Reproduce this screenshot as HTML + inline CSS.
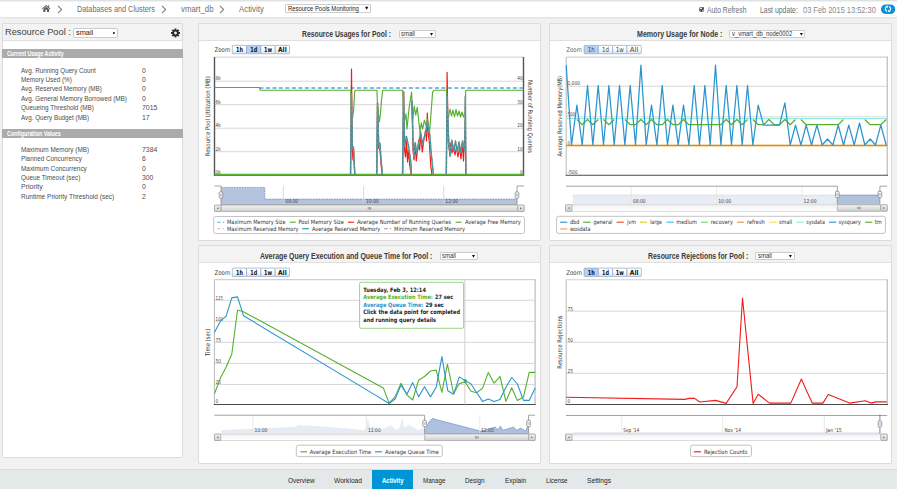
<!DOCTYPE html>
<html lang="en"><head><meta charset="utf-8"><title>Resource Pools Monitoring</title>
<style>
html,body{margin:0;padding:0;}
body{width:897px;height:489px;overflow:hidden;position:relative;background:#f1f1f1;font-family:"Liberation Sans",sans-serif;}
.t{position:absolute;white-space:nowrap;transform-origin:0 0;display:block;}
.abs{position:absolute;box-sizing:border-box;}
#topbar{left:0;top:0;width:897px;height:17px;background:linear-gradient(#d9dcdc 0,#e6e8e8 1px,#fff 2.2px);box-shadow:0 1px 1.5px rgba(0,0,0,.08);}
.panel{background:#fff;border:1px solid #dcdcdc;border-radius:1px;}
.phead{left:0;top:0;right:0;height:17px;background:#f3f3f3;border-bottom:1px solid #e0e0e0;}
.bar{background:#ababab;height:9px;}
.sel{background:#fff;border:1px solid #cdcdcd;border-radius:1px;}
#nav{left:0;top:468.6px;width:897px;height:20.4px;background:#e5e8e8;border-top:1px solid #d9dcdc;}
#navact{left:372px;top:469.5px;width:40.6px;height:19.5px;background:#0096d6;}
svg{position:absolute;left:0;top:0;overflow:visible;}

</style></head>
<body>
<div id="topbar" class="abs"></div>
<svg width="897" height="20" viewBox="0 0 897 20"><g fill="#5e5e5e">
<path d="M42 8.6 L46.2 4.9 L50.4 8.6 L49.7 9.3 L46.2 6.2 L42.7 9.3 Z"/>
<path d="M43.3 9.3 L46.2 6.8 L49.1 9.3 L49.1 11.9 L47 11.9 L47 9.8 L45.4 9.8 L45.4 11.9 L43.3 11.9 Z"/>
<rect x="48.2" y="5.2" width="0.9" height="2"/></g>
<g fill="none" stroke="#808080" stroke-width="1.1">
<path d="M58 5.9 L61.6 9.5 L58 13.1"/><path d="M162 5.9 L165.6 9.5 L162 13.1"/><path d="M220 5.9 L223.6 9.5 L220 13.1"/></g>
</svg>
<span class="t " style="left:76.60px;top:5.10px;font-size:8.4px;line-height:8.4px;color:#6e6e6e;transform:scaleX(0.8712);">Databases and Clusters</span>
<span class="t " style="left:180.60px;top:5.10px;font-size:8.4px;line-height:8.4px;color:#6e6e6e;transform:scaleX(0.9310);">vmart_db</span>
<span class="t " style="left:239.10px;top:5.10px;font-size:8.4px;line-height:8.4px;color:#6e6e6e;transform:scaleX(0.9397);">Activity</span>
<div class="abs sel" style="left:284.7px;top:3.9px;width:86px;height:8.8px;"></div>
<span class="t " style="left:287.90px;top:5.60px;font-size:6.4px;line-height:6.4px;color:#222;transform:scaleX(0.9240);">Resource Pools Monitoring</span>
<div class="abs" style="left:699px;top:6.6px;width:5.4px;height:5.4px;border:0.8px solid #8a8a8a;border-radius:1px;background:linear-gradient(#f8f8f8,#dcdcdc);"></div>
<svg width="897" height="20" viewBox="0 0 897 20"><path d="M700.2 9.2 L701.4 10.8 L703.5 7.5" fill="none" stroke="#222" stroke-width="1.2"/></svg>
<span class="t " style="left:706.60px;top:6.70px;font-size:8.2px;line-height:8.2px;color:#6e6e6e;transform:scaleX(0.8253);">Auto Refresh</span>
<span class="t " style="left:760.10px;top:6.70px;font-size:8.2px;line-height:8.2px;color:#6e6e6e;transform:scaleX(0.8397);">Last update:</span>
<span class="t " style="left:803.10px;top:6.70px;font-size:8.2px;line-height:8.2px;color:#8a8a8a;transform:scaleX(0.9084);">03 Feb 2015 13:52:30</span>
<svg width="897" height="20" viewBox="0 0 897 20"><rect x="881.2" y="5.1" width="13.8" height="8.7" rx="4.3" fill="#0b5f93"/><rect x="881.2" y="4.5" width="13.8" height="8.6" rx="4.3" fill="#0a93dc"/>
<g fill="none" stroke="#fff" stroke-width="1.2"><path d="M886.90 11.26 A2.6 2.6 0 0 1 886.51 6.77"/><path d="M889.10 6.54 A2.6 2.6 0 0 1 889.49 11.03"/></g>
<path d="M885.65 5.54 L887.37 8.00 L888.32 6.32 Z M890.35 12.26 L888.63 9.80 L887.68 11.48 Z" fill="#fff"/></svg>
<div class="abs panel" style="left:2px;top:23px;width:181px;height:435px;"><div class="abs phead"></div></div>
<span class="t " style="left:4.70px;top:27.00px;font-size:9.6px;line-height:9.6px;color:#444;transform:scaleX(0.9648);">Resource Pool :</span>
<div class="abs sel" style="left:73.4px;top:28.3px;width:45.1px;height:10.1px;border-radius:2px;"></div>
<span class="t " style="left:75.80px;top:29.00px;font-size:7.6px;line-height:7.6px;color:#222;transform:scaleX(0.9698);">small</span>
<svg width="897" height="60" viewBox="0 0 897 60"><circle cx="113.9" cy="33" r="0.95" fill="#111"/></svg>
<svg width="897" height="60" viewBox="0 0 897 60"><g transform="translate(175.5 32.95)"><g fill="#262626">
<circle r="3.05"/><rect x="-0.95" y="-4.45" width="1.9" height="2.4" transform="rotate(0)"/><rect x="-0.95" y="-4.45" width="1.9" height="2.4" transform="rotate(45)"/><rect x="-0.95" y="-4.45" width="1.9" height="2.4" transform="rotate(90)"/><rect x="-0.95" y="-4.45" width="1.9" height="2.4" transform="rotate(135)"/><rect x="-0.95" y="-4.45" width="1.9" height="2.4" transform="rotate(180)"/><rect x="-0.95" y="-4.45" width="1.9" height="2.4" transform="rotate(225)"/><rect x="-0.95" y="-4.45" width="1.9" height="2.4" transform="rotate(270)"/><rect x="-0.95" y="-4.45" width="1.9" height="2.4" transform="rotate(315)"/></g><circle r="1.45" fill="#f4f4f4"/></g></svg>
<div class="abs bar" style="left:2px;top:49.2px;width:181px;height:8.6px;"></div>
<span class="t " style="left:7.10px;top:50.50px;font-size:6.6px;line-height:6.6px;color:#fff;transform:scaleX(0.7996);font-weight:bold;">Current Usage Activity</span>
<span class="t " style="left:21.10px;top:67.10px;font-size:7.4px;line-height:7.4px;color:#4c4c4c;transform:scaleX(0.8482);">Avg. Running Query Count</span>
<span class="t " style="left:142.00px;top:67.10px;font-size:7.4px;line-height:7.4px;color:#4c4c4c;transform:scaleX(0.9233);">0</span>
<span class="t " style="left:21.10px;top:76.10px;font-size:7.4px;line-height:7.4px;color:#4c4c4c;transform:scaleX(0.8537);">Memory Used (%)</span>
<span class="t " style="left:142.00px;top:76.10px;font-size:7.4px;line-height:7.4px;color:#4c4c4c;transform:scaleX(0.9233);">0</span>
<span class="t " style="left:21.10px;top:85.10px;font-size:7.4px;line-height:7.4px;color:#4c4c4c;transform:scaleX(0.8502);">Avg. Reserved Memory (MB)</span>
<span class="t " style="left:142.00px;top:85.10px;font-size:7.4px;line-height:7.4px;color:#4c4c4c;transform:scaleX(0.9233);">0</span>
<span class="t " style="left:21.10px;top:95.10px;font-size:7.4px;line-height:7.4px;color:#4c4c4c;transform:scaleX(0.8581);">Avg. General Memory Borrowed (MB)</span>
<span class="t " style="left:142.00px;top:95.10px;font-size:7.4px;line-height:7.4px;color:#4c4c4c;transform:scaleX(0.9233);">0</span>
<span class="t " style="left:21.10px;top:104.10px;font-size:7.4px;line-height:7.4px;color:#4c4c4c;transform:scaleX(0.8587);">Queueing Threshold (MB)</span>
<span class="t " style="left:142.00px;top:104.10px;font-size:7.4px;line-height:7.4px;color:#4c4c4c;transform:scaleX(0.9294);">7015</span>
<span class="t " style="left:21.10px;top:114.10px;font-size:7.4px;line-height:7.4px;color:#4c4c4c;transform:scaleX(0.8474);">Avg. Query Budget (MB)</span>
<span class="t " style="left:142.00px;top:114.10px;font-size:7.4px;line-height:7.4px;color:#4c4c4c;transform:scaleX(0.9354);">17</span>
<div class="abs bar" style="left:2px;top:128.9px;width:181px;height:8.8px;"></div>
<span class="t " style="left:7.10px;top:130.50px;font-size:6.6px;line-height:6.6px;color:#fff;transform:scaleX(0.8150);font-weight:bold;">Configuration Values</span>
<span class="t " style="left:21.10px;top:146.10px;font-size:7.4px;line-height:7.4px;color:#4c4c4c;transform:scaleX(0.8640);">Maximum Memory (MB)</span>
<span class="t " style="left:142.00px;top:146.10px;font-size:7.4px;line-height:7.4px;color:#4c4c4c;transform:scaleX(0.9294);">7384</span>
<span class="t " style="left:21.10px;top:155.10px;font-size:7.4px;line-height:7.4px;color:#4c4c4c;transform:scaleX(0.8557);">Planned Concurrency</span>
<span class="t " style="left:142.00px;top:155.10px;font-size:7.4px;line-height:7.4px;color:#4c4c4c;transform:scaleX(0.9233);">6</span>
<span class="t " style="left:21.10px;top:165.10px;font-size:7.4px;line-height:7.4px;color:#4c4c4c;transform:scaleX(0.8662);">Maximum Concurrency</span>
<span class="t " style="left:142.00px;top:165.10px;font-size:7.4px;line-height:7.4px;color:#4c4c4c;transform:scaleX(0.9233);">0</span>
<span class="t " style="left:21.10px;top:174.10px;font-size:7.4px;line-height:7.4px;color:#4c4c4c;transform:scaleX(0.8596);">Queue Timeout (sec)</span>
<span class="t " style="left:142.00px;top:174.10px;font-size:7.4px;line-height:7.4px;color:#4c4c4c;transform:scaleX(0.9152);">300</span>
<span class="t " style="left:21.10px;top:183.10px;font-size:7.4px;line-height:7.4px;color:#4c4c4c;transform:scaleX(0.9468);">Priority</span>
<span class="t " style="left:142.00px;top:183.10px;font-size:7.4px;line-height:7.4px;color:#4c4c4c;transform:scaleX(0.9233);">0</span>
<span class="t " style="left:21.10px;top:193.10px;font-size:7.4px;line-height:7.4px;color:#4c4c4c;transform:scaleX(0.8805);">Runtime Priority Threshold (sec)</span>
<span class="t " style="left:142.00px;top:193.10px;font-size:7.4px;line-height:7.4px;color:#4c4c4c;transform:scaleX(0.9233);">2</span>
<div id="nav" class="abs"></div><div id="navact" class="abs"></div>
<span class="t " style="left:287.50px;top:477.00px;font-size:7.6px;line-height:7.6px;color:#262626;transform:scaleX(0.8430);">Overview</span>
<span class="t " style="left:334.10px;top:477.00px;font-size:7.6px;line-height:7.6px;color:#262626;transform:scaleX(0.8760);">Workload</span>
<span class="t " style="left:423.10px;top:477.00px;font-size:7.6px;line-height:7.6px;color:#262626;transform:scaleX(0.8156);">Manage</span>
<span class="t " style="left:465.40px;top:477.00px;font-size:7.6px;line-height:7.6px;color:#262626;transform:scaleX(0.8242);">Design</span>
<span class="t " style="left:504.80px;top:477.00px;font-size:7.6px;line-height:7.6px;color:#262626;transform:scaleX(0.8505);">Explain</span>
<span class="t " style="left:545.90px;top:477.00px;font-size:7.6px;line-height:7.6px;color:#262626;transform:scaleX(0.8245);">License</span>
<span class="t " style="left:587.00px;top:477.00px;font-size:7.6px;line-height:7.6px;color:#262626;transform:scaleX(0.8776);">Settings</span>
<span class="t " style="left:381.60px;top:477.00px;font-size:7.6px;line-height:7.6px;color:#fff;transform:scaleX(0.7868);font-weight:bold;">Activity</span>
<div class="abs panel" style="left:198px;top:23px;width:343.0px;height:218.0px;"><div class="abs phead"></div></div>
<div class="abs panel" style="left:198px;top:245px;width:343.0px;height:219.0px;"><div class="abs phead"></div></div>
<div class="abs panel" style="left:549px;top:23px;width:343.0px;height:218.0px;"><div class="abs phead"></div></div>
<div class="abs panel" style="left:549px;top:245px;width:343.0px;height:219.0px;"><div class="abs phead"></div></div>
<span class="t " style="left:302.00px;top:29.90px;font-size:8.8px;line-height:8.8px;color:#3a3a3a;transform:scaleX(0.7744);font-weight:bold;">Resource Usages for Pool :</span>
<div class="abs sel" style="left:398.5px;top:30.0px;width:37.2px;height:8.2px;"></div>
<span class="t " style="left:401.00px;top:30.65px;font-size:6.3px;line-height:6.3px;color:#333;transform:scaleX(0.9455);">small</span>
<span class="t " style="left:636.80px;top:29.90px;font-size:8.8px;line-height:8.8px;color:#3a3a3a;transform:scaleX(0.8021);font-weight:bold;">Memory Usage for Node :</span>
<div class="abs sel" style="left:729.3px;top:30.0px;width:76.2px;height:8.2px;"></div>
<span class="t " style="left:731.80px;top:30.65px;font-size:6.3px;line-height:6.3px;color:#333;transform:scaleX(0.9340);">v_vmart_db_node0002</span>
<span class="t " style="left:260.40px;top:251.90px;font-size:8.8px;line-height:8.8px;color:#3a3a3a;transform:scaleX(0.7891);font-weight:bold;">Average Query Execution and Queue Time for Pool :</span>
<div class="abs sel" style="left:439.5px;top:252.0px;width:38.2px;height:8.2px;"></div>
<span class="t " style="left:442.00px;top:252.65px;font-size:6.3px;line-height:6.3px;color:#333;transform:scaleX(0.9455);">small</span>
<span class="t " style="left:648.40px;top:251.90px;font-size:8.8px;line-height:8.8px;color:#3a3a3a;transform:scaleX(0.7837);font-weight:bold;">Resource Rejections for Pool :</span>
<div class="abs sel" style="left:755.4px;top:252.0px;width:39.2px;height:8.2px;"></div>
<span class="t " style="left:757.90px;top:252.65px;font-size:6.3px;line-height:6.3px;color:#333;transform:scaleX(0.9455);">small</span>
<svg width="897" height="489" viewBox="0 0 897 489"><defs>
<linearGradient id="btn" x1="0" y1="0" x2="0" y2="1"><stop offset="0.4" stop-color="#fff"/><stop offset="1" stop-color="#dfe3f3"/></linearGradient>
<linearGradient id="trk" x1="0" y1="0" x2="0" y2="1"><stop offset="0" stop-color="#f2f2f2"/><stop offset="1" stop-color="#fff"/></linearGradient>
<linearGradient id="thumb" x1="0" y1="0" x2="0" y2="1"><stop offset="0" stop-color="#f4f4f4"/><stop offset="1" stop-color="#cfcfcf"/></linearGradient>
</defs>
<path d="M365.00 6.80 H368.40 L366.70 9.80 Z" fill="#111"/>
<path d="M430.00 33.00 H433.00 L431.50 35.80 Z" fill="#111"/>
<path d="M799.90 33.00 H802.90 L801.40 35.80 Z" fill="#111"/>
<path d="M472.00 255.00 H475.00 L473.50 257.80 Z" fill="#111"/>
<path d="M788.90 255.00 H791.90 L790.40 257.80 Z" fill="#111"/>
<text x="214.50" y="52.30" font-family="DejaVu Sans, Liberation Sans, sans-serif" font-size="6.6" fill="#444" textLength="15.70" lengthAdjust="spacingAndGlyphs">Zoom</text>
<rect x="232.30" y="45.40" width="14.3" height="8.35" fill="url(#btn)" stroke="#8fa5cc" stroke-width="0.7" rx="0.6"/>
<text x="236.00" y="52.00" font-family="DejaVu Sans, Liberation Sans, sans-serif" font-size="6.8" fill="#111" textLength="6.90" lengthAdjust="spacingAndGlyphs" font-weight="bold">1h</text>
<rect x="246.60" y="45.40" width="14.3" height="8.35" fill="#b9d0ee" stroke="#8fa5cc" stroke-width="0.7" rx="0.6"/>
<text x="250.30" y="52.00" font-family="DejaVu Sans, Liberation Sans, sans-serif" font-size="6.8" fill="#111" textLength="6.90" lengthAdjust="spacingAndGlyphs" font-weight="bold">1d</text>
<rect x="260.90" y="45.40" width="14.3" height="8.35" fill="url(#btn)" stroke="#8fa5cc" stroke-width="0.7" rx="0.6"/>
<text x="264.05" y="52.00" font-family="DejaVu Sans, Liberation Sans, sans-serif" font-size="6.8" fill="#111" textLength="8.00" lengthAdjust="spacingAndGlyphs" font-weight="bold">1w</text>
<rect x="275.20" y="45.40" width="14.3" height="8.35" fill="url(#btn)" stroke="#8fa5cc" stroke-width="0.7" rx="0.6"/>
<text x="278.05" y="52.00" font-family="DejaVu Sans, Liberation Sans, sans-serif" font-size="6.8" fill="#111" textLength="8.60" lengthAdjust="spacingAndGlyphs" font-weight="bold">All</text>
<path d="M214.4 57.1 H523.7" stroke="#dadada" stroke-width="1.1"/>
<path d="M214.4 81.20 H523.7" stroke="#d4d4d4" stroke-width="0.9"/>
<path d="M214.4 104.70 H523.7" stroke="#d4d4d4" stroke-width="0.9"/>
<path d="M214.4 128.20 H523.7" stroke="#d4d4d4" stroke-width="0.9"/>
<path d="M214.4 151.70 H523.7" stroke="#d4d4d4" stroke-width="0.9"/>
<text x="215.60" y="80.00" font-family="DejaVu Sans, Liberation Sans, sans-serif" font-size="5.5" fill="#444" textLength="5.20" lengthAdjust="spacingAndGlyphs">8k</text>
<text x="215.60" y="103.50" font-family="DejaVu Sans, Liberation Sans, sans-serif" font-size="5.5" fill="#444" textLength="5.20" lengthAdjust="spacingAndGlyphs">6k</text>
<text x="215.60" y="127.00" font-family="DejaVu Sans, Liberation Sans, sans-serif" font-size="5.5" fill="#444" textLength="5.20" lengthAdjust="spacingAndGlyphs">4k</text>
<text x="215.60" y="150.50" font-family="DejaVu Sans, Liberation Sans, sans-serif" font-size="5.5" fill="#444" textLength="5.20" lengthAdjust="spacingAndGlyphs">2k</text>
<text x="215.60" y="174.00" font-family="DejaVu Sans, Liberation Sans, sans-serif" font-size="5.5" fill="#444" textLength="5.20" lengthAdjust="spacingAndGlyphs">0k</text>
<text x="517.20" y="80.00" font-family="DejaVu Sans, Liberation Sans, sans-serif" font-size="5.5" fill="#444" textLength="5.40" lengthAdjust="spacingAndGlyphs">40</text>
<text x="517.20" y="103.50" font-family="DejaVu Sans, Liberation Sans, sans-serif" font-size="5.5" fill="#444" textLength="5.40" lengthAdjust="spacingAndGlyphs">30</text>
<text x="517.20" y="127.00" font-family="DejaVu Sans, Liberation Sans, sans-serif" font-size="5.5" fill="#444" textLength="5.40" lengthAdjust="spacingAndGlyphs">20</text>
<text x="517.20" y="150.50" font-family="DejaVu Sans, Liberation Sans, sans-serif" font-size="5.5" fill="#444" textLength="5.40" lengthAdjust="spacingAndGlyphs">10</text>
<text x="519.90" y="174.00" font-family="DejaVu Sans, Liberation Sans, sans-serif" font-size="5.5" fill="#444" textLength="2.70" lengthAdjust="spacingAndGlyphs">0</text>
<text x="210.00" y="156.30" font-family="DejaVu Sans, Liberation Sans, sans-serif" font-size="6.4" fill="#333" textLength="80.10" lengthAdjust="spacingAndGlyphs" transform="rotate(-90 210.00 156.30)">Resource Pool Utilization (MB)</text>
<text x="528.10" y="80.00" font-family="DejaVu Sans, Liberation Sans, sans-serif" font-size="6.4" fill="#333" textLength="73.00" lengthAdjust="spacingAndGlyphs" transform="rotate(90 528.10 80.00)">Number of Running Queries</text>
<path d="M214.5 57.1 V175.2 M523.5 57.1 V175.2" stroke="#555" stroke-width="1.4"/>
<path d="M213.8 175.2 H524.3000000000001" stroke="#4a4a4a" stroke-width="1.15"/>
<path d="M259.4 88.0 L523.7 88.0" fill="none" stroke="#4ba6d8" stroke-width="1.7" stroke-linejoin="round" stroke-dasharray="4 2.5"/>
<path d="M214.4 174.5 L523.7 174.5" fill="none" stroke="#55b02c" stroke-width="1.7" stroke-linejoin="round"/>
<path d="M350.6 174.6 L351.5 69.2 L352.3 150.0 L353.0 160.0 L353.6 148.0 L354.8 174.6" fill="none" stroke="#f21a1a" stroke-width="1.2" stroke-linejoin="round"/>
<path d="M376.8 174.6 L377.5 103.2 L378.6 148.0 L380.0 150.0 L381.0 164.0 L382.3 174.6" fill="none" stroke="#f21a1a" stroke-width="1.2" stroke-linejoin="round"/>
<path d="M402.7 174.6 L403.7 91.7 L404.6 150.0 L405.5 157.0 L406.5 140.0 L407.5 162.0 L408.5 150.0 L409.8 166.0 L411.2 174.6" fill="none" stroke="#f21a1a" stroke-width="1.2" stroke-linejoin="round"/>
<path d="M412.0 104.0 L413.0 150.0 L414.0 160.0 L415.2 145.0 L416.3 161.0 L417.5 150.0 L418.7 140.0 L419.6 150.0 L420.8 135.0 L422.3 152.0 L423.8 140.0 L425.6 130.0 L426.5 141.0 L427.3 113.0 L428.3 135.0 L429.3 141.0 L430.0 153.0 L430.8 166.0 L432.0 174.6" fill="none" stroke="#f21a1a" stroke-width="1.2" stroke-linejoin="round"/>
<path d="M446.4 174.6 L447.1 72.3 L448.2 142.0 L449.5 151.0 L450.5 143.0 L452.0 153.0 L453.5 146.0 L455.0 155.0 L456.5 147.0 L458.0 157.0 L459.5 148.0 L461.0 159.0 L462.5 142.0 L463.5 161.0 L464.5 140.0 L465.3 120.0 L465.8 174.6" fill="none" stroke="#f21a1a" stroke-width="1.2" stroke-linejoin="round"/>
<path d="M214.4 87.5 L259.4 87.5 L260.2 90.2 L350.8 90.2 L351.3 116.0 L352.3 119.0 L353.5 112.0 L354.6 92.0 L355.4 90.2 L376.9 90.2 L377.5 104.0 L378.5 114.0 L379.4 121.8 L380.5 113.0 L381.5 100.0 L382.8 90.2 L402.7 90.2 L403.9 124.0 L406.0 113.8 L407.0 129.2 L409.0 108.7 L411.6 92.1 L412.6 121.5 L414.2 106.2 L415.7 115.1 L417.2 107.4 L418.8 121.5 L420.0 131.7 L421.3 122.8 L422.6 129.2 L424.4 120.2 L425.9 125.3 L427.5 118.9 L429.5 133.0 L430.8 116.4 L432.6 92.1 L433.9 90.2 L446.7 90.2 L447.5 116.0 L448.5 117.5 L450.0 109.0 L451.5 116.0 L453.0 110.0 L454.5 117.0 L456.0 109.5 L457.5 116.0 L459.0 111.0 L460.5 117.0 L462.0 112.0 L463.5 117.0 L465.0 113.0 L465.8 90.2 L523.7 90.2" fill="none" stroke="#55b02c" stroke-width="1.15" stroke-linejoin="round"/>
<path d="M350.5 174.6 L351.4 94.0 L352.4 147.5 L353.3 146.9 L354.8 174.6" fill="none" stroke="#f5a98a" stroke-width="1.5" stroke-linejoin="round" stroke-dasharray="3 2"/>
<path d="M350.5 174.6 L351.4 94.0 L352.4 147.5 L353.3 146.9 L354.8 174.6" fill="none" stroke="#2098a6" stroke-width="1.3" stroke-linejoin="round"/>
<path d="M350.5 174.6 L351.4 94.0 L352.4 147.5 L353.3 146.9 L354.8 174.6" fill="none" stroke="#8c8c8c" stroke-width="1.2" stroke-linejoin="round" stroke-dasharray="2 2.6"/>
<path d="M376.7 174.6 L377.5 103.0 L378.8 146.2 L380.0 143.2 L380.6 153.6 L382.4 174.6" fill="none" stroke="#f5a98a" stroke-width="1.5" stroke-linejoin="round" stroke-dasharray="3 2"/>
<path d="M376.7 174.6 L377.5 103.0 L378.8 146.2 L380.0 143.2 L380.6 153.6 L382.4 174.6" fill="none" stroke="#2098a6" stroke-width="1.3" stroke-linejoin="round"/>
<path d="M376.7 174.6 L377.5 103.0 L378.8 146.2 L380.0 143.2 L380.6 153.6 L382.4 174.6" fill="none" stroke="#8c8c8c" stroke-width="1.2" stroke-linejoin="round" stroke-dasharray="2 2.6"/>
<path d="M402.5 174.6 L403.5 92.0 L404.5 146.2 L406.4 136.4 L408.8 147.5 L411.1 164.7 L411.3 174.6" fill="none" stroke="#f5a98a" stroke-width="1.5" stroke-linejoin="round" stroke-dasharray="3 2"/>
<path d="M402.5 174.6 L403.5 92.0 L404.5 146.2 L406.4 136.4 L408.8 147.5 L411.1 164.7 L411.3 174.6" fill="none" stroke="#2098a6" stroke-width="1.3" stroke-linejoin="round"/>
<path d="M402.5 174.6 L403.5 92.0 L404.5 146.2 L406.4 136.4 L408.8 147.5 L411.1 164.7 L411.3 174.6" fill="none" stroke="#8c8c8c" stroke-width="1.2" stroke-linejoin="round" stroke-dasharray="2 2.6"/>
<path d="M412.0 100.5 L413.1 142.6 L413.8 156.1 L415.2 142.6 L416.8 153.6 L418.7 145.0 L420.5 131.5 L422.3 143.8 L425.4 134.0 L427.3 121.7 L429.7 134.0 L430.9 149.9 L433.4 174.6" fill="none" stroke="#f5a98a" stroke-width="1.5" stroke-linejoin="round" stroke-dasharray="3 2"/>
<path d="M412.0 100.5 L413.1 142.6 L413.8 156.1 L415.2 142.6 L416.8 153.6 L418.7 145.0 L420.5 131.5 L422.3 143.8 L425.4 134.0 L427.3 121.7 L429.7 134.0 L430.9 149.9 L433.4 174.6" fill="none" stroke="#2098a6" stroke-width="1.3" stroke-linejoin="round"/>
<path d="M412.0 100.5 L413.1 142.6 L413.8 156.1 L415.2 142.6 L416.8 153.6 L418.7 145.0 L420.5 131.5 L422.3 143.8 L425.4 134.0 L427.3 121.7 L429.7 134.0 L430.9 149.9 L433.4 174.6" fill="none" stroke="#8c8c8c" stroke-width="1.2" stroke-linejoin="round" stroke-dasharray="2 2.6"/>
<path d="M446.3 174.6 L447.0 96.0 L448.7 140.1 L450.0 156.1 L451.8 140.1 L453.7 151.1 L455.5 141.0 L457.3 152.0 L459.0 142.0 L460.8 153.0 L462.5 141.0 L464.0 150.0 L464.8 150.0 L465.4 96.0 L465.9 174.6" fill="none" stroke="#f5a98a" stroke-width="1.5" stroke-linejoin="round" stroke-dasharray="3 2"/>
<path d="M446.3 174.6 L447.0 96.0 L448.7 140.1 L450.0 156.1 L451.8 140.1 L453.7 151.1 L455.5 141.0 L457.3 152.0 L459.0 142.0 L460.8 153.0 L462.5 141.0 L464.0 150.0 L464.8 150.0 L465.4 96.0 L465.9 174.6" fill="none" stroke="#2098a6" stroke-width="1.3" stroke-linejoin="round"/>
<path d="M446.3 174.6 L447.0 96.0 L448.7 140.1 L450.0 156.1 L451.8 140.1 L453.7 151.1 L455.5 141.0 L457.3 152.0 L459.0 142.0 L460.8 153.0 L462.5 141.0 L464.0 150.0 L464.8 150.0 L465.4 96.0 L465.9 174.6" fill="none" stroke="#8c8c8c" stroke-width="1.2" stroke-linejoin="round" stroke-dasharray="2 2.6"/>
<path d="M264.8 199.1 H517 V204.7 H221 V187.4 H264.8 Z" fill="#b4c4df"/>
<path d="M221 187.4 H264.8 V199.1 H517" fill="none" stroke="#5d82ba" stroke-width="0.7" stroke-dasharray="1.6 1"/>
<path d="M283.3 186.0 V204.7" stroke="#d2d2d2" stroke-width="0.8"/>
<path d="M363.6 186.0 V204.7" stroke="#d2d2d2" stroke-width="0.8"/>
<path d="M443.7 186.0 V204.7" stroke="#d2d2d2" stroke-width="0.8"/>
<text x="285.30" y="202.50" font-family="DejaVu Sans, Liberation Sans, sans-serif" font-size="5.5" fill="#444" textLength="12.90" lengthAdjust="spacingAndGlyphs">08:00</text>
<text x="366.00" y="202.50" font-family="DejaVu Sans, Liberation Sans, sans-serif" font-size="5.5" fill="#444" textLength="12.90" lengthAdjust="spacingAndGlyphs">10:00</text>
<text x="445.30" y="202.50" font-family="DejaVu Sans, Liberation Sans, sans-serif" font-size="5.5" fill="#444" textLength="12.90" lengthAdjust="spacingAndGlyphs">12:00</text>
<path d="M214.5 186.0 H221 V204.7 H517 V186.0 H524.1" fill="none" stroke="#8c8c8c" stroke-width="0.8"/>
<rect x="219.20" y="191.90" width="3.6" height="6.2" rx="0.9" fill="#fff" stroke="#777" stroke-width="0.7"/>
<path d="M220.50 193.50 v3 M221.50 193.50 v3" stroke="#777" stroke-width="0.4"/>
<rect x="515.20" y="191.90" width="3.6" height="6.2" rx="0.9" fill="#fff" stroke="#777" stroke-width="0.7"/>
<path d="M516.50 193.50 v3 M517.50 193.50 v3" stroke="#777" stroke-width="0.4"/>
<rect x="214.5" y="205.1" width="309.60" height="6.4" fill="url(#trk)" stroke="#c4c4c4" stroke-width="0.6"/>
<rect x="221.1" y="205.1" width="296.80" height="6.4" fill="url(#thumb)" stroke="#a8a8a8" stroke-width="0.7" rx="0.8"/>
<path d="M368.20 207.1 v2.4 M369.50 207.1 v2.4 M370.80 207.1 v2.4" stroke="#666" stroke-width="0.6"/>
<rect x="214.50" y="205.1" width="6.4" height="6.4" fill="url(#thumb)" stroke="#999" stroke-width="0.7" rx="0.8"/>
<path d="M218.40 207.30 L217.00 208.30 L218.40 209.30 Z" fill="#444"/>
<rect x="517.70" y="205.1" width="6.4" height="6.4" fill="url(#thumb)" stroke="#999" stroke-width="0.7" rx="0.8"/>
<path d="M520.20 207.30 L521.60 208.30 L520.20 209.30 Z" fill="#444"/>
<rect x="213.7" y="216.5" width="310.8" height="17.1" rx="2" fill="#fff" stroke="#b4b4b4" stroke-width="0.8"/>
<path d="M217.20 222.20 H224.30" stroke="#4ba6d8" stroke-width="1.15" stroke-dasharray="3.4 2.4 1.1 6"/>
<text x="227.00" y="224.20" font-family="DejaVu Sans, Liberation Sans, sans-serif" font-size="5.9" fill="#333" textLength="58.50" lengthAdjust="spacingAndGlyphs">Maximum Memory Size</text>
<path d="M289.80 222.20 H295.70" stroke="#55b02c" stroke-width="1.15"/>
<text x="298.40" y="224.20" font-family="DejaVu Sans, Liberation Sans, sans-serif" font-size="5.9" fill="#333" textLength="45.60" lengthAdjust="spacingAndGlyphs">Pool Memory Size</text>
<path d="M348.00 222.20 H354.20" stroke="#f21a1a" stroke-width="1.15"/>
<text x="356.90" y="224.20" font-family="DejaVu Sans, Liberation Sans, sans-serif" font-size="5.9" fill="#333" textLength="94.40" lengthAdjust="spacingAndGlyphs">Average Number of Running Queries</text>
<path d="M455.60 222.20 H461.50" stroke="#55b02c" stroke-width="1.15"/>
<text x="465.00" y="224.20" font-family="DejaVu Sans, Liberation Sans, sans-serif" font-size="5.9" fill="#333" textLength="55.80" lengthAdjust="spacingAndGlyphs">Average Free Memory</text>
<path d="M217.20 228.70 H224.30" stroke="#f5a98a" stroke-width="1.15" stroke-dasharray="3.4 2.4 1.1 6"/>
<text x="227.00" y="230.70" font-family="DejaVu Sans, Liberation Sans, sans-serif" font-size="5.9" fill="#333" textLength="71.40" lengthAdjust="spacingAndGlyphs">Maximum Reserved Memory</text>
<path d="M302.30 228.70 H308.90" stroke="#2098a6" stroke-width="1.15"/>
<text x="312.00" y="230.70" font-family="DejaVu Sans, Liberation Sans, sans-serif" font-size="5.9" fill="#333" textLength="68.30" lengthAdjust="spacingAndGlyphs">Average Reserved Memory</text>
<path d="M384.20 228.70 H391.30" stroke="#8c8c8c" stroke-width="1.15" stroke-dasharray="3.4 2.4 1.1 6"/>
<text x="394.00" y="230.70" font-family="DejaVu Sans, Liberation Sans, sans-serif" font-size="5.9" fill="#333" textLength="71.00" lengthAdjust="spacingAndGlyphs">Minimum Reserved Memory</text>
<text x="566.30" y="52.30" font-family="DejaVu Sans, Liberation Sans, sans-serif" font-size="6.6" fill="#666" textLength="15.70" lengthAdjust="spacingAndGlyphs">Zoom</text>
<rect x="584.10" y="45.40" width="14.3" height="8.35" fill="#b9d0ee" stroke="#8fa5cc" stroke-width="0.7" rx="0.6"/>
<text x="587.80" y="52.00" font-family="DejaVu Sans, Liberation Sans, sans-serif" font-size="6.8" fill="#444" textLength="6.90" lengthAdjust="spacingAndGlyphs">1h</text>
<rect x="598.40" y="45.40" width="14.3" height="8.35" fill="url(#btn)" stroke="#8fa5cc" stroke-width="0.7" rx="0.6"/>
<text x="602.10" y="52.00" font-family="DejaVu Sans, Liberation Sans, sans-serif" font-size="6.8" fill="#444" textLength="6.90" lengthAdjust="spacingAndGlyphs">1d</text>
<rect x="612.70" y="45.40" width="14.3" height="8.35" fill="url(#btn)" stroke="#8fa5cc" stroke-width="0.7" rx="0.6"/>
<text x="615.85" y="52.00" font-family="DejaVu Sans, Liberation Sans, sans-serif" font-size="6.8" fill="#444" textLength="8.00" lengthAdjust="spacingAndGlyphs">1w</text>
<rect x="627.00" y="45.40" width="14.3" height="8.35" fill="url(#btn)" stroke="#8fa5cc" stroke-width="0.7" rx="0.6"/>
<text x="629.85" y="52.00" font-family="DejaVu Sans, Liberation Sans, sans-serif" font-size="6.8" fill="#444" textLength="8.60" lengthAdjust="spacingAndGlyphs">All</text>
<path d="M566.2 57.1 H887.4" fill="none" stroke="#d0d0d0" stroke-width="1.1"/><path d="M887.3 56.6 V175.2" fill="none" stroke="#c4c4c4" stroke-width="1.4"/>
<path d="M566.2 86.30 H887.4" stroke="#d4d4d4" stroke-width="0.9"/>
<path d="M566.2 116.80 H887.4" stroke="#d4d4d4" stroke-width="0.9"/>
<path d="M566.2 57.1 V175.2" stroke="#b8b8b8" stroke-width="1"/>
<path d="M565.6 175.2 H888.0" stroke="#4a4a4a" stroke-width="1.15"/>
<text x="567.40" y="85.40" font-family="DejaVu Sans, Liberation Sans, sans-serif" font-size="5.5" fill="#444" textLength="12.70" lengthAdjust="spacingAndGlyphs">1,000</text>
<text x="567.40" y="115.90" font-family="DejaVu Sans, Liberation Sans, sans-serif" font-size="5.5" fill="#444" textLength="7.70" lengthAdjust="spacingAndGlyphs">500</text>
<text x="567.40" y="144.70" font-family="DejaVu Sans, Liberation Sans, sans-serif" font-size="5.5" fill="#444" textLength="2.50" lengthAdjust="spacingAndGlyphs">0</text>
<text x="567.40" y="174.00" font-family="DejaVu Sans, Liberation Sans, sans-serif" font-size="5.5" fill="#444" textLength="10.20" lengthAdjust="spacingAndGlyphs">-500</text>
<text x="562.00" y="156.60" font-family="DejaVu Sans, Liberation Sans, sans-serif" font-size="6.4" fill="#333" textLength="80.70" lengthAdjust="spacingAndGlyphs" transform="rotate(-90 562.00 156.60)">Average Reserved Memory(MB)</text>
<path d="M566.2 145.5 L887.4 145.5" fill="none" stroke="#f5e050" stroke-width="1.4" stroke-linejoin="round"/>
<path d="M566.2 145.5 L887.4 145.5" fill="none" stroke="#e2823c" stroke-width="1.35" stroke-linejoin="round"/>
<path d="M566.2 118.6 L887.4 118.6" fill="none" stroke="#86ecd8" stroke-width="1.0" stroke-linejoin="round"/>
<path d="M576.9 119.5 L582.2 124.7 L587.5 119.5 L592.9 124.7 L598.2 119.5" fill="none" stroke="#55b02c" stroke-width="1.2" stroke-linejoin="round"/>
<path d="M603.5 119.5 L608.9 124.7 L614.2 119.5" fill="none" stroke="#55b02c" stroke-width="1.2" stroke-linejoin="round"/>
<path d="M624.9 119.5 L630.2 124.7 L635.5 124.7 L640.9 119.5 L646.2 124.7 L651.5 119.5 L656.9 124.7 L662.2 124.7 L667.5 119.5 L672.9 124.7 L678.2 124.7 L683.5 119.5 L688.9 124.7 L694.2 124.7 L699.5 124.7 L704.9 124.7 L710.2 124.7 L715.5 124.7 L720.9 124.7 L726.2 119.5 L731.5 124.7 L736.9 119.5 L742.2 124.7 L747.5 119.5" fill="none" stroke="#55b02c" stroke-width="1.2" stroke-linejoin="round"/>
<path d="M752.9 119.5 L758.2 124.7 L763.5 124.7 L768.9 119.5 L774.2 124.7 L779.5 124.7 L784.9 119.5 L790.2 124.7 L795.5 119.5" fill="none" stroke="#55b02c" stroke-width="1.2" stroke-linejoin="round"/>
<path d="M800.9 119.5 L806.2 124.7 L811.5 124.7 L816.9 124.7 L822.2 124.7 L827.5 124.7 L832.9 124.7 L838.2 124.7 L843.5 119.5" fill="none" stroke="#55b02c" stroke-width="1.2" stroke-linejoin="round"/>
<path d="M864.8 119.5 L870.2 124.7 L875.5 124.7 L880.8 124.7 L886.2 119.5" fill="none" stroke="#55b02c" stroke-width="1.2" stroke-linejoin="round"/>
<path d="M566.2 65.2 L571.5 145.0 L576.9 105.1 L582.2 145.0 L587.5 85.5 L592.9 145.0 L598.2 85.5 L603.5 145.0 L608.9 85.5 L614.2 145.0 L619.5 85.5 L624.9 145.0 L630.2 85.5 L635.5 145.0 L640.9 65.2 L646.2 145.0 L651.5 105.1 L656.9 145.0 L662.2 85.5 L667.5 145.0 L672.9 105.1 L678.2 145.0 L683.5 105.1 L688.9 145.0 L694.2 85.5 L699.5 145.0 L704.9 85.5 L710.2 145.0 L715.5 65.2 L720.9 145.0 L726.2 85.5 L731.5 145.0 L736.9 85.5 L742.2 145.0 L747.5 85.5 L752.9 145.0 L758.2 105.1 L763.5 125.2 L768.9 125.2 L774.2 125.2 L779.5 125.2 L784.9 102.8 L790.2 145.0 L795.5 125.2 L800.9 145.0 L806.2 125.2 L811.5 145.0 L816.9 125.2 L822.2 145.0 L827.5 139.0 L832.9 145.0 L838.2 125.2 L843.5 145.0 L848.8 125.2 L854.2 145.0 L859.5 123.0 L864.8 145.0 L870.2 139.0 L875.5 145.0 L880.8 125.2 L886.2 145.0" fill="none" stroke="#2b95cf" stroke-width="1.25" stroke-linejoin="round" stroke-linejoin="miter"/>
<path d="M572.7 195.2 H837.3 V204.6 H572.7 Z" fill="#e8edf5"/><path d="M572.7 195.2 H837.3" stroke="#cdd8e8" stroke-width="0.7"/>
<path d="M837.3 195.2 H879.9 V204.6 H837.3 Z" fill="#b0c2de"/><path d="M837.3 195.2 H879.9" stroke="#6a8cc0" stroke-width="0.8"/>
<path d="M631.3 186.2 V204.6" stroke="#e4e4e4" stroke-width="0.8"/>
<path d="M716.6 186.2 V204.6" stroke="#e4e4e4" stroke-width="0.8"/>
<path d="M802.0 186.2 V204.6" stroke="#e4e4e4" stroke-width="0.8"/>
<text x="632.80" y="202.60" font-family="DejaVu Sans, Liberation Sans, sans-serif" font-size="5.5" fill="#444" textLength="12.90" lengthAdjust="spacingAndGlyphs">08:00</text>
<text x="718.20" y="202.60" font-family="DejaVu Sans, Liberation Sans, sans-serif" font-size="5.5" fill="#444" textLength="12.90" lengthAdjust="spacingAndGlyphs">10:00</text>
<text x="803.60" y="202.60" font-family="DejaVu Sans, Liberation Sans, sans-serif" font-size="5.5" fill="#444" textLength="12.90" lengthAdjust="spacingAndGlyphs">12:00</text>
<path d="M566 186.2 H837.3 V204.6 H879.9 V186.2 H887.2" fill="none" stroke="#8c8c8c" stroke-width="0.8"/>
<rect x="835.50" y="191.30" width="3.6" height="6.2" rx="0.9" fill="#fff" stroke="#777" stroke-width="0.7"/>
<path d="M836.80 192.90 v3 M837.80 192.90 v3" stroke="#777" stroke-width="0.4"/>
<rect x="878.10" y="191.30" width="3.6" height="6.2" rx="0.9" fill="#fff" stroke="#777" stroke-width="0.7"/>
<path d="M879.40 192.90 v3 M880.40 192.90 v3" stroke="#777" stroke-width="0.4"/>
<rect x="565.6" y="204.8" width="321.60" height="6.4" fill="url(#trk)" stroke="#c4c4c4" stroke-width="0.6"/>
<rect x="837.3" y="204.8" width="43.30" height="6.4" fill="url(#thumb)" stroke="#a8a8a8" stroke-width="0.7" rx="0.8"/>
<path d="M857.65 206.8 v2.4 M858.95 206.8 v2.4 M860.25 206.8 v2.4" stroke="#666" stroke-width="0.6"/>
<rect x="565.60" y="204.8" width="6.4" height="6.4" fill="url(#thumb)" stroke="#999" stroke-width="0.7" rx="0.8"/>
<path d="M569.50 207.00 L568.10 208.00 L569.50 209.00 Z" fill="#444"/>
<rect x="880.80" y="204.8" width="6.4" height="6.4" fill="url(#thumb)" stroke="#999" stroke-width="0.7" rx="0.8"/>
<path d="M883.30 207.00 L884.70 208.00 L883.30 209.00 Z" fill="#444"/>
<rect x="556.6" y="216.3" width="328.8" height="17.1" rx="2" fill="#fff" stroke="#b4b4b4" stroke-width="0.8"/>
<path d="M560.10 222.20 H567.30" stroke="#2b95cf" stroke-width="1.15"/>
<text x="570.00" y="224.00" font-family="DejaVu Sans, Liberation Sans, sans-serif" font-size="5.9" fill="#333" textLength="9.30" lengthAdjust="spacingAndGlyphs">dbd</text>
<path d="M583.10 222.20 H590.50" stroke="#55b02c" stroke-width="1.15"/>
<text x="593.50" y="224.00" font-family="DejaVu Sans, Liberation Sans, sans-serif" font-size="5.9" fill="#333" textLength="18.80" lengthAdjust="spacingAndGlyphs">general</text>
<path d="M616.50 222.20 H623.90" stroke="#e8541e" stroke-width="1.15"/>
<text x="627.00" y="224.00" font-family="DejaVu Sans, Liberation Sans, sans-serif" font-size="5.9" fill="#333" textLength="8.90" lengthAdjust="spacingAndGlyphs">jvm</text>
<path d="M640.00 222.20 H647.00" stroke="#d4d41e" stroke-width="1.15"/>
<text x="650.00" y="224.00" font-family="DejaVu Sans, Liberation Sans, sans-serif" font-size="5.9" fill="#333" textLength="12.00" lengthAdjust="spacingAndGlyphs">large</text>
<path d="M666.40 222.20 H673.80" stroke="#3cc0f0" stroke-width="1.15"/>
<text x="676.30" y="224.00" font-family="DejaVu Sans, Liberation Sans, sans-serif" font-size="5.9" fill="#333" textLength="20.50" lengthAdjust="spacingAndGlyphs">medium</text>
<path d="M700.80 222.20 H707.90" stroke="#72dc72" stroke-width="1.15"/>
<text x="710.80" y="224.00" font-family="DejaVu Sans, Liberation Sans, sans-serif" font-size="5.9" fill="#333" textLength="22.10" lengthAdjust="spacingAndGlyphs">recovery</text>
<path d="M736.90 222.20 H744.00" stroke="#f0903c" stroke-width="1.15"/>
<text x="747.00" y="224.00" font-family="DejaVu Sans, Liberation Sans, sans-serif" font-size="5.9" fill="#333" textLength="17.70" lengthAdjust="spacingAndGlyphs">refresh</text>
<path d="M769.30 222.20 H776.80" stroke="#f8e24a" stroke-width="1.15"/>
<text x="779.00" y="224.00" font-family="DejaVu Sans, Liberation Sans, sans-serif" font-size="5.9" fill="#333" textLength="13.20" lengthAdjust="spacingAndGlyphs">small</text>
<path d="M796.40 222.20 H803.80" stroke="#86f0dc" stroke-width="1.15"/>
<text x="806.20" y="224.00" font-family="DejaVu Sans, Liberation Sans, sans-serif" font-size="5.9" fill="#333" textLength="18.70" lengthAdjust="spacingAndGlyphs">sysdata</text>
<path d="M828.90 222.20 H836.20" stroke="#2b95cf" stroke-width="1.15"/>
<text x="838.80" y="224.00" font-family="DejaVu Sans, Liberation Sans, sans-serif" font-size="5.9" fill="#333" textLength="22.10" lengthAdjust="spacingAndGlyphs">sysquery</text>
<path d="M865.10 222.20 H872.30" stroke="#55b02c" stroke-width="1.15"/>
<text x="874.70" y="224.00" font-family="DejaVu Sans, Liberation Sans, sans-serif" font-size="5.9" fill="#333" textLength="7.00" lengthAdjust="spacingAndGlyphs">tm</text>
<path d="M560.10 228.90 H567.30" stroke="#f89a74" stroke-width="1.15"/>
<text x="570.00" y="230.70" font-family="DejaVu Sans, Liberation Sans, sans-serif" font-size="5.9" fill="#333" textLength="20.50" lengthAdjust="spacingAndGlyphs">wosdata</text>
<text x="214.50" y="275.00" font-family="DejaVu Sans, Liberation Sans, sans-serif" font-size="6.6" fill="#444" textLength="15.70" lengthAdjust="spacingAndGlyphs">Zoom</text>
<rect x="232.30" y="268.10" width="14.3" height="8.35" fill="url(#btn)" stroke="#8fa5cc" stroke-width="0.7" rx="0.6"/>
<text x="236.00" y="274.70" font-family="DejaVu Sans, Liberation Sans, sans-serif" font-size="6.8" fill="#111" textLength="6.90" lengthAdjust="spacingAndGlyphs" font-weight="bold">1h</text>
<rect x="246.60" y="268.10" width="14.3" height="8.35" fill="url(#btn)" stroke="#8fa5cc" stroke-width="0.7" rx="0.6"/>
<text x="250.30" y="274.70" font-family="DejaVu Sans, Liberation Sans, sans-serif" font-size="6.8" fill="#111" textLength="6.90" lengthAdjust="spacingAndGlyphs" font-weight="bold">1d</text>
<rect x="260.90" y="268.10" width="14.3" height="8.35" fill="url(#btn)" stroke="#8fa5cc" stroke-width="0.7" rx="0.6"/>
<text x="264.05" y="274.70" font-family="DejaVu Sans, Liberation Sans, sans-serif" font-size="6.8" fill="#111" textLength="8.00" lengthAdjust="spacingAndGlyphs" font-weight="bold">1w</text>
<rect x="275.20" y="268.10" width="14.3" height="8.35" fill="url(#btn)" stroke="#8fa5cc" stroke-width="0.7" rx="0.6"/>
<text x="278.05" y="274.70" font-family="DejaVu Sans, Liberation Sans, sans-serif" font-size="6.8" fill="#111" textLength="8.60" lengthAdjust="spacingAndGlyphs" font-weight="bold">All</text>
<path d="M214.4 279.6 H535.2" fill="none" stroke="#d0d0d0" stroke-width="1.1"/><path d="M535.1 279.1 V404.5" fill="none" stroke="#c4c4c4" stroke-width="1.4"/>
<path d="M214.4 300.30 H535.2" stroke="#d4d4d4" stroke-width="0.9"/>
<path d="M214.4 321.35 H535.2" stroke="#d4d4d4" stroke-width="0.9"/>
<path d="M214.4 342.40 H535.2" stroke="#d4d4d4" stroke-width="0.9"/>
<path d="M214.4 363.45 H535.2" stroke="#d4d4d4" stroke-width="0.9"/>
<path d="M214.4 384.50 H535.2" stroke="#d4d4d4" stroke-width="0.9"/>
<path d="M214.4 279.6 V404.5" stroke="#b8b8b8" stroke-width="1"/>
<path d="M213.8 404.5 H535.8000000000001" stroke="#4a4a4a" stroke-width="1.15"/>
<text x="215.60" y="299.60" font-family="DejaVu Sans, Liberation Sans, sans-serif" font-size="5.5" fill="#444" textLength="7.20" lengthAdjust="spacingAndGlyphs">125</text>
<text x="215.60" y="320.65" font-family="DejaVu Sans, Liberation Sans, sans-serif" font-size="5.5" fill="#444" textLength="7.20" lengthAdjust="spacingAndGlyphs">100</text>
<text x="215.60" y="341.70" font-family="DejaVu Sans, Liberation Sans, sans-serif" font-size="5.5" fill="#444" textLength="5.50" lengthAdjust="spacingAndGlyphs">75</text>
<text x="215.60" y="362.75" font-family="DejaVu Sans, Liberation Sans, sans-serif" font-size="5.5" fill="#444" textLength="5.50" lengthAdjust="spacingAndGlyphs">50</text>
<text x="215.60" y="383.80" font-family="DejaVu Sans, Liberation Sans, sans-serif" font-size="5.5" fill="#444" textLength="5.50" lengthAdjust="spacingAndGlyphs">25</text>
<text x="215.60" y="403.40" font-family="DejaVu Sans, Liberation Sans, sans-serif" font-size="5.5" fill="#444" textLength="2.70" lengthAdjust="spacingAndGlyphs">0</text>
<text x="209.60" y="356.10" font-family="DejaVu Sans, Liberation Sans, sans-serif" font-size="6.4" fill="#333" textLength="27.80" lengthAdjust="spacingAndGlyphs" transform="rotate(-90 209.60 356.10)">Time (sec)</text>
<path d="M464.9 279.6 V404.5" stroke="#c8c8c8" stroke-width="0.9"/>
<path d="M214.4 393.9 L220.6 377.5 L226.1 367.3 L231.8 354.0 L237.5 310.2 L242.5 311.2 L375.0 383.6 L383.4 388.1 L389.1 403.1 L395.1 396.9 L401.0 383.2 L406.9 394.9 L412.7 400.0 L418.6 380.2 L424.5 376.5 L430.5 371.0 L436.2 370.1 L441.9 392.4 L447.4 364.2 L453.6 393.5 L459.3 383.6 L465.2 382.0 L471.0 391.2 L476.7 392.8 L482.6 388.1 L488.3 372.4 L494.1 383.2 L500.0 376.5 L505.9 401.4 L511.7 387.7 L517.4 400.4 L523.5 396.9 L529.2 372.4 L535.2 372.4" fill="none" stroke="#55b02c" stroke-width="1.1" stroke-linejoin="round"/>
<path d="M214.4 332.5 L220.6 320.8 L226.1 316.1 L231.8 297.9 L237.5 296.9 L243.5 315.7 L375.0 394.9 L389.1 403.5 L395.1 399.0 L401.0 385.1 L406.9 394.3 L412.7 382.6 L418.6 396.9 L424.5 386.7 L430.5 396.9 L436.2 387.3 L441.9 356.6 L447.8 390.8 L453.6 394.3 L459.3 376.9 L465.2 380.6 L471.0 384.0 L476.7 392.8 L482.6 401.4 L488.3 399.0 L494.1 401.4 L500.0 399.4 L505.9 387.3 L511.7 377.5 L517.4 384.0 L523.5 400.4 L529.2 400.4 L535.2 388.1" fill="none" stroke="#2b95cf" stroke-width="1.1" stroke-linejoin="round"/>
<circle cx="465.2" cy="380.6" r="1.6" fill="#2b95cf"/><circle cx="465.2" cy="382" r="1.3" fill="#55b02c"/>
<rect x="359.6" y="282.3" width="104" height="46" rx="1.5" fill="#fff" fill-opacity="0.92" stroke="#8fd07a" stroke-width="0.9"/>
<text x="363.30" y="292.00" font-family="DejaVu Sans, Liberation Sans, sans-serif" font-size="6.0" fill="#222" textLength="62.70" lengthAdjust="spacingAndGlyphs" font-weight="bold">Tuesday, Feb 3, 12:14</text>
<text x="363.30" y="299.00" font-family="DejaVu Sans, Liberation Sans, sans-serif" font-size="6.0" fill="#55b02c" textLength="69.50" lengthAdjust="spacingAndGlyphs" font-weight="bold">Average Execution Time:</text>
<text x="435.00" y="299.00" font-family="DejaVu Sans, Liberation Sans, sans-serif" font-size="6.0" fill="#222" textLength="18.20" lengthAdjust="spacingAndGlyphs" font-weight="bold">27 sec</text>
<text x="363.30" y="307.00" font-family="DejaVu Sans, Liberation Sans, sans-serif" font-size="6.0" fill="#2b95cf" textLength="60.00" lengthAdjust="spacingAndGlyphs" font-weight="bold">Average Queue Time:</text>
<text x="425.60" y="307.00" font-family="DejaVu Sans, Liberation Sans, sans-serif" font-size="6.0" fill="#222" textLength="18.20" lengthAdjust="spacingAndGlyphs" font-weight="bold">29 sec</text>
<text x="363.30" y="314.00" font-family="DejaVu Sans, Liberation Sans, sans-serif" font-size="6.0" fill="#222" textLength="96.70" lengthAdjust="spacingAndGlyphs" font-weight="bold">Click the data point for completed</text>
<text x="363.30" y="322.00" font-family="DejaVu Sans, Liberation Sans, sans-serif" font-size="6.0" fill="#222" textLength="72.70" lengthAdjust="spacingAndGlyphs" font-weight="bold">and running query details</text>
<path d="M221.1 433.8 L221.1 430.1 L240 429.3 L291.3 427.1 L292.4 427 L293 425.7 L293.8 427 L296 426.6 L298.4 425.1 L320 426.3 L345 428.3 L363.6 430 L366.5 428 L367.6 419.1 L368.8 421 L370 429.5 L373 426.1 L376 428 L380 430 L385 428 L388 426.5 L391 425 L394 428.5 L397 430 L400 427 L402.1 417.1 L403.3 424 L404.5 428 L408 425 L411 426 L413 427 L418 430 L423.2 428.1 L424.6 430 L424.6 433.8 Z" fill="#e7ecf4"/>
<path d="M424.6 433.8 L424.6 430.2 L425.4 429.6 L429 422 L432.2 418.5 L480.4 431.1 L485.4 430.1 L490 428.6 L495.4 427.1 L497.4 430.1 L499 428 L500.5 426.1 L502 429 L503.5 430.1 L508 428.8 L513.5 427.1 L515.5 429 L517.5 430.1 L520.5 428.1 L523 429.5 L525.5 431.1 L527 428 L528 426 L528.6 427 L528.6 433.8 Z" fill="#afc1de"/>
<path d="M424.6 430.2 L425.4 429.6 L429 422 L432.2 418.5 L480.4 431.1 L485.4 430.1 L490 428.6 L495.4 427.1 L497.4 430.1 L499 428 L500.5 426.1 L502 429 L503.5 430.1 L508 428.8 L513.5 427.1 L515.5 429 L517.5 430.1 L520.5 428.1 L523 429.5 L525.5 431.1 L527 428 L528 426 L528.6 427" fill="none" stroke="#6a8cc0" stroke-width="0.6"/>
<path d="M252.8 415.2 V433.8" stroke="#e4e4e4" stroke-width="0.8"/>
<path d="M366.4 415.2 V433.8" stroke="#e4e4e4" stroke-width="0.8"/>
<path d="M479.8 415.2 V433.8" stroke="#e4e4e4" stroke-width="0.8"/>
<text x="254.60" y="431.50" font-family="DejaVu Sans, Liberation Sans, sans-serif" font-size="5.5" fill="#444" textLength="12.70" lengthAdjust="spacingAndGlyphs">10:00</text>
<text x="368.00" y="431.50" font-family="DejaVu Sans, Liberation Sans, sans-serif" font-size="5.5" fill="#444" textLength="12.70" lengthAdjust="spacingAndGlyphs">11:00</text>
<text x="481.00" y="431.50" font-family="DejaVu Sans, Liberation Sans, sans-serif" font-size="5.5" fill="#444" textLength="12.70" lengthAdjust="spacingAndGlyphs">12:00</text>
<path d="M214.4 415.2 H424.6 V433.8 H528.6 V415.2 H535.2" fill="none" stroke="#8c8c8c" stroke-width="0.8"/>
<rect x="422.80" y="420.40" width="3.6" height="6.2" rx="0.9" fill="#fff" stroke="#777" stroke-width="0.7"/>
<path d="M424.10 422.00 v3 M425.10 422.00 v3" stroke="#777" stroke-width="0.4"/>
<rect x="526.80" y="420.40" width="3.6" height="6.2" rx="0.9" fill="#fff" stroke="#777" stroke-width="0.7"/>
<path d="M528.10 422.00 v3 M529.10 422.00 v3" stroke="#777" stroke-width="0.4"/>
<rect x="214.4" y="434.1" width="320.80" height="6.4" fill="url(#trk)" stroke="#c4c4c4" stroke-width="0.6"/>
<rect x="424.6" y="434.1" width="104.40" height="6.4" fill="url(#thumb)" stroke="#a8a8a8" stroke-width="0.7" rx="0.8"/>
<path d="M475.50 436.1 v2.4 M476.80 436.1 v2.4 M478.10 436.1 v2.4" stroke="#666" stroke-width="0.6"/>
<rect x="214.40" y="434.1" width="6.4" height="6.4" fill="url(#thumb)" stroke="#999" stroke-width="0.7" rx="0.8"/>
<path d="M218.30 436.30 L216.90 437.30 L218.30 438.30 Z" fill="#444"/>
<rect x="528.80" y="434.1" width="6.4" height="6.4" fill="url(#thumb)" stroke="#999" stroke-width="0.7" rx="0.8"/>
<path d="M531.30 436.30 L532.70 437.30 L531.30 438.30 Z" fill="#444"/>
<rect x="296.3" y="445.2" width="146" height="11.4" rx="2" fill="#fff" stroke="#b4b4b4" stroke-width="0.8"/>
<path d="M300.40 451.80 H307.00" stroke="#55b02c" stroke-width="1.15"/>
<text x="309.80" y="453.80" font-family="DejaVu Sans, Liberation Sans, sans-serif" font-size="5.9" fill="#333" textLength="61.40" lengthAdjust="spacingAndGlyphs">Average Execution Time</text>
<path d="M375.00 451.80 H382.10" stroke="#2b95cf" stroke-width="1.15"/>
<text x="385.10" y="453.80" font-family="DejaVu Sans, Liberation Sans, sans-serif" font-size="5.9" fill="#333" textLength="53.80" lengthAdjust="spacingAndGlyphs">Average Queue Time</text>
<text x="566.30" y="275.00" font-family="DejaVu Sans, Liberation Sans, sans-serif" font-size="6.6" fill="#444" textLength="15.70" lengthAdjust="spacingAndGlyphs">Zoom</text>
<rect x="584.10" y="268.10" width="14.3" height="8.35" fill="#b9d0ee" stroke="#8fa5cc" stroke-width="0.7" rx="0.6"/>
<text x="587.80" y="274.70" font-family="DejaVu Sans, Liberation Sans, sans-serif" font-size="6.8" fill="#111" textLength="6.90" lengthAdjust="spacingAndGlyphs" font-weight="bold">1h</text>
<rect x="598.40" y="268.10" width="14.3" height="8.35" fill="url(#btn)" stroke="#8fa5cc" stroke-width="0.7" rx="0.6"/>
<text x="602.10" y="274.70" font-family="DejaVu Sans, Liberation Sans, sans-serif" font-size="6.8" fill="#111" textLength="6.90" lengthAdjust="spacingAndGlyphs" font-weight="bold">1d</text>
<rect x="612.70" y="268.10" width="14.3" height="8.35" fill="url(#btn)" stroke="#8fa5cc" stroke-width="0.7" rx="0.6"/>
<text x="615.85" y="274.70" font-family="DejaVu Sans, Liberation Sans, sans-serif" font-size="6.8" fill="#111" textLength="8.00" lengthAdjust="spacingAndGlyphs" font-weight="bold">1w</text>
<rect x="627.00" y="268.10" width="14.3" height="8.35" fill="url(#btn)" stroke="#8fa5cc" stroke-width="0.7" rx="0.6"/>
<text x="629.85" y="274.70" font-family="DejaVu Sans, Liberation Sans, sans-serif" font-size="6.8" fill="#111" textLength="8.60" lengthAdjust="spacingAndGlyphs" font-weight="bold">All</text>
<path d="M566.2 279.8 H887.4" fill="none" stroke="#d0d0d0" stroke-width="1.1"/><path d="M887.3 279.3 V404.5" fill="none" stroke="#c4c4c4" stroke-width="1.4"/>
<path d="M566.2 311.20 H887.4" stroke="#d4d4d4" stroke-width="0.9"/>
<path d="M566.2 342.30 H887.4" stroke="#d4d4d4" stroke-width="0.9"/>
<path d="M566.2 373.40 H887.4" stroke="#d4d4d4" stroke-width="0.9"/>
<path d="M566.2 279.8 V404.5" stroke="#b8b8b8" stroke-width="1"/>
<path d="M565.6 404.5 H888.0" stroke="#4a4a4a" stroke-width="1.15"/>
<text x="567.40" y="310.50" font-family="DejaVu Sans, Liberation Sans, sans-serif" font-size="5.5" fill="#444" textLength="5.50" lengthAdjust="spacingAndGlyphs">75</text>
<text x="567.40" y="341.60" font-family="DejaVu Sans, Liberation Sans, sans-serif" font-size="5.5" fill="#444" textLength="5.50" lengthAdjust="spacingAndGlyphs">50</text>
<text x="567.40" y="372.70" font-family="DejaVu Sans, Liberation Sans, sans-serif" font-size="5.5" fill="#444" textLength="5.50" lengthAdjust="spacingAndGlyphs">25</text>
<text x="567.40" y="403.40" font-family="DejaVu Sans, Liberation Sans, sans-serif" font-size="5.5" fill="#444" textLength="2.70" lengthAdjust="spacingAndGlyphs">0</text>
<text x="562.00" y="368.70" font-family="DejaVu Sans, Liberation Sans, sans-serif" font-size="6.4" fill="#333" textLength="53.30" lengthAdjust="spacingAndGlyphs" transform="rotate(-90 562.00 368.70)">Resource Rejections</text>
<path d="M566.2 397.3 L684.9 399.4 L689.0 398.4 L694.5 398.4 L699.8 402.0 L715.6 400.4 L726.2 403.4 L737.0 386.8 L742.5 298.0 L753.1 403.4 L758.2 394.2 L769.4 403.1 L790.8 403.1 L801.4 379.0 L806.9 391.6 L812.3 403.1 L822.9 403.1 L828.3 394.5 L849.5 403.1 L865.3 400.8 L871.0 403.1 L876.1 401.9 L886.7 401.9" fill="none" stroke="#f21a1a" stroke-width="1.1" stroke-linejoin="round"/>
<path d="M572.7 432.2 H879.9 V433.8 H572.7 Z" fill="#dfe7f3"/>
<path d="M621.8 415.5 V433.8" stroke="#e4e4e4" stroke-width="0.8"/>
<path d="M722.6 415.5 V433.8" stroke="#e4e4e4" stroke-width="0.8"/>
<path d="M824.4 415.5 V433.8" stroke="#e4e4e4" stroke-width="0.8"/>
<text x="623.20" y="431.50" font-family="DejaVu Sans, Liberation Sans, sans-serif" font-size="5.5" fill="#444" textLength="16.10" lengthAdjust="spacingAndGlyphs">Sep &#x27;14</text>
<text x="724.60" y="431.50" font-family="DejaVu Sans, Liberation Sans, sans-serif" font-size="5.5" fill="#444" textLength="16.50" lengthAdjust="spacingAndGlyphs">Nov &#x27;14</text>
<text x="826.00" y="431.50" font-family="DejaVu Sans, Liberation Sans, sans-serif" font-size="5.5" fill="#444" textLength="15.80" lengthAdjust="spacingAndGlyphs">Jan &#x27;15</text>
<path d="M566 415.5 H887.2" fill="none" stroke="#8c8c8c" stroke-width="0.8"/>
<path d="M879.9 414.5 V433.8" stroke="#4a6fa5" stroke-width="0.8"/>
<rect x="878.10" y="420.80" width="3.6" height="6.2" rx="0.9" fill="#fff" stroke="#777" stroke-width="0.7"/>
<path d="M879.40 422.40 v3 M880.40 422.40 v3" stroke="#777" stroke-width="0.4"/>
<rect x="565.6" y="434.1" width="321.60" height="6.4" fill="url(#trk)" stroke="#c4c4c4" stroke-width="0.6"/>
<rect x="565.60" y="434.1" width="6.4" height="6.4" fill="url(#thumb)" stroke="#999" stroke-width="0.7" rx="0.8"/>
<path d="M569.50 436.30 L568.10 437.30 L569.50 438.30 Z" fill="#444"/>
<rect x="880.80" y="434.1" width="6.4" height="6.4" fill="url(#thumb)" stroke="#999" stroke-width="0.7" rx="0.8"/>
<path d="M883.30 436.30 L884.70 437.30 L883.30 438.30 Z" fill="#444"/>
<rect x="690.5" y="445.2" width="61" height="11.4" rx="2" fill="#fff" stroke="#b4b4b4" stroke-width="0.8"/>
<path d="M693.90 451.80 H701.10" stroke="#f21a1a" stroke-width="1.15"/>
<text x="703.90" y="453.80" font-family="DejaVu Sans, Liberation Sans, sans-serif" font-size="5.9" fill="#333" textLength="43.60" lengthAdjust="spacingAndGlyphs">Rejection Counts</text>
</svg>
</body></html>
